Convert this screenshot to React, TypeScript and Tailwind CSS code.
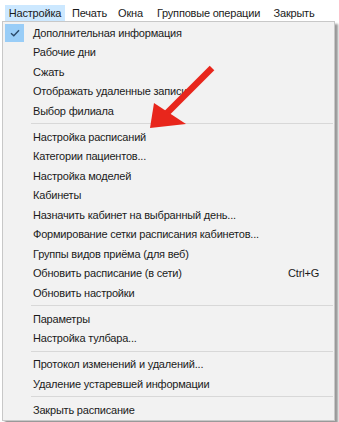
import React from "react";

type Entry = { label: string; shortcut?: string; checked?: boolean } | "sep";

const entries: Entry[] = [
  { label: "Дополнительная информация", checked: true },
  { label: "Рабочие дни" },
  { label: "Сжать" },
  { label: "Отображать удаленные записи" },
  { label: "Выбор филиала" },
  "sep",
  { label: "Настройка расписаний" },
  { label: "Категории пациентов..." },
  { label: "Настройка моделей" },
  { label: "Кабинеты" },
  { label: "Назначить кабинет на выбранный день..." },
  { label: "Формирование сетки расписания кабинетов..." },
  { label: "Группы видов приёма (для веб)" },
  { label: "Обновить расписание (в сети)", shortcut: "Ctrl+G" },
  { label: "Обновить настройки" },
  "sep",
  { label: "Параметры" },
  { label: "Настройка тулбара..." },
  "sep",
  { label: "Протокол изменений и удалений..." },
  { label: "Удаление устаревшей информации" },
  "sep",
  { label: "Закрыть расписание" },
];

// widths tuned so item text centres line up with the screenshot
const topMenu = [
  { label: "Настройка", cls: "w-[60px] bg-[#cce8ff]" },
  { label: "Печать", cls: "w-[43px] ml-[3px]" },
  { label: "Окна", cls: "w-[35px] ml-[2px]" },
  { label: "Групповые операции", cls: "w-[113px] ml-[4px]" },
  { label: "Закрыть", cls: "w-[52px] ml-[3px]" },
];

function CheckMark() {
  return (
    <div className="w-[19px] h-[18px] bg-[#99cdf7] flex items-center justify-center">
      <svg width="10" height="8" viewBox="0 0 10 8">
        <path d="M1 4.2 L3.8 6.8 L9 1.2" fill="none" stroke="#2b4a6a" strokeWidth="1.4" />
      </svg>
    </div>
  );
}

export default function App() {
  return (
    <div
      className="relative w-[339px] h-[422px] bg-white overflow-hidden text-[11px] tracking-[-0.2px] text-[#1b1b1b]"
      style={{ fontFamily: '"Liberation Sans", Arial, sans-serif' }}
    >
      {/* Menu bar */}
      <div className="flex h-[21px] pt-[5px] pl-[5px] items-stretch">
        {topMenu.map((m) => (
          <div
            key={m.label}
            className={"flex items-center justify-center whitespace-nowrap " + m.cls}
          >
            {m.label}
          </div>
        ))}
      </div>

      {/* Dropdown */}
      <div className="ml-[2px] w-[333px] border border-[#c8c8c8] bg-[#f2f2f2] pt-[1px] shadow-[3px_3px_2px_rgba(0,0,0,0.4)]">
        {entries.map((e, i) =>
          e === "sep" ? (
            <div key={i} className="h-[6.5px] flex items-center pl-[28px] pr-[1px]">
              <div className="h-px w-full bg-[#d8d8d8]" />
            </div>
          ) : (
            <div key={i} className="h-[19.5px] flex items-center whitespace-nowrap">
              <div className="w-[30px] pl-[2px] flex items-center">
                {e.checked && <CheckMark />}
              </div>
              <div className="flex-1">{e.label}</div>
              {e.shortcut && <div className="pr-[15px]">{e.shortcut}</div>}
            </div>
          )
        )}
      </div>

      {/* Red arrow annotation */}
      <svg className="absolute left-0 top-0" width="339" height="422" viewBox="0 0 339 422">
        <line x1="212" y1="68" x2="166" y2="114" stroke="#e8261c" strokeWidth="6.5" strokeLinecap="butt" />
        <polygon points="150,128 154,103 186,124" fill="#e8261c" />
      </svg>
    </div>
  );
}
